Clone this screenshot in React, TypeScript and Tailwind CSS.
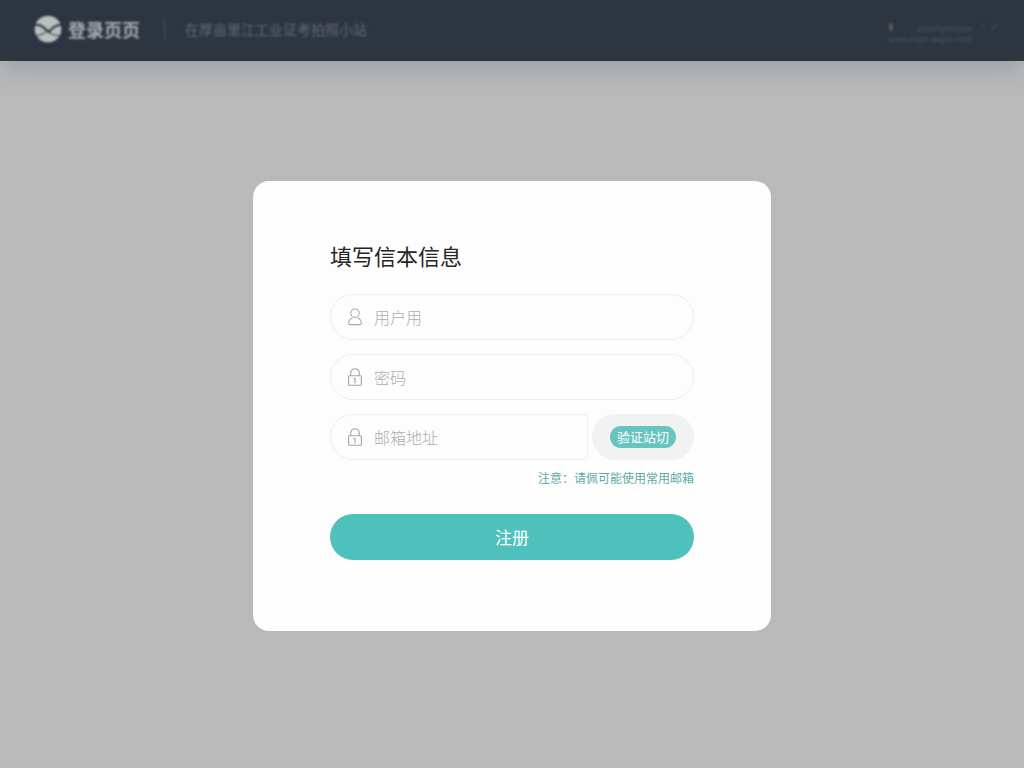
import type { InputHTMLAttributes, ReactNode } from "react"
import clsx from "clsx"

interface FieldProps extends InputHTMLAttributes<HTMLInputElement> {
  id: string
  label: string
  icon: ReactNode
}

function UserIcon() {
  return (
    <svg viewBox="0 0 14 18" className="h-[18px] w-3.5" fill="none" stroke="#acacac" strokeWidth="1.1" strokeLinejoin="round" aria-hidden="true">
      <circle cx="7" cy="5.2" r="4.2" />
      <path d="M4.500 10C2 10.800.8 12.600.8 14.800v1c0 .5.3.8.8.8h10.800c.5 0 .8-.3.8-.8v-1c0-2.200-1.200-4-3.700-4.800" />
    </svg>
  )
}

function LockIcon() {
  return (
    <svg viewBox="0 0 14 18" className="h-[18px] w-3.5" fill="none" stroke="#a5a5a5" strokeWidth="1.1" aria-hidden="true">
      <rect x=".6" y="7.800" width="12.800" height="9.400" rx=".8" />
      <path d="M2.700 7.800V5a4.300 4.300 0 0 1 8.600 0v2.800M5.500 10.500H7v5" />
    </svg>
  )
}

function LogoIcon() {
  return (
    <svg viewBox="0 0 28 28" className="h-7 w-7 shrink-0" aria-hidden="true">
      <circle cx="14" cy="14" r="13.300" fill="#bcbfc1" />
      <path d="M0 10.500C6 8 9 12 15 17c2.500-3.500 6-7 13-7.500" fill="none" stroke="#2d3541" strokeWidth="2.200" />
      <path d="M2 20.500c5-.5 8-1.500 11-4.500 3 3 7 4.500 12 4.500" fill="none" stroke="#2d3541" strokeWidth="1" />
    </svg>
  )
}

function Field({ id, label, icon, className, ...rest }: FieldProps) {
  return (
    <div
      className={clsx(
        "flex h-[46px] min-w-0 flex-1 items-center gap-3 border border-[#efefef] bg-[#fdfdfd] pl-[17px] pr-4 focus-within:border-[#4fc1bc]",
        className
      )}
    >
      <label htmlFor={id} aria-label={label} className="shrink-0">
        {icon}
      </label>
      <input
        id={id}
        placeholder={label}
        aria-label={label}
        className="min-w-0 flex-1 bg-transparent text-base font-light text-[#333333] outline-none placeholder:text-[#adadad]"
        {...rest}
      />
    </div>
  )
}

export default function App() {
  return (
    <div className="flex min-h-screen flex-col bg-[#b9b9b9] font-['Noto_Sans_CJK_SC',sans-serif]">
      <header className="flex h-[61px] items-center bg-[#2d3541] pl-[34px] pr-6 shadow-[0_4px_28px_rgba(90,110,135,0.4)]">
        <div className="flex flex-1 items-center pb-1 blur-[1px]">
          <LogoIcon />
          <span className="ml-1.5 text-lg font-bold text-[#a9adb1]">登录页页</span>
          <span className="ml-6 mr-5 h-5 w-px bg-[#4d5560]" />
          <span className="text-sm text-[#626973]">在厚亩里江工业证考拍照小站</span>
          <div className="ml-auto flex flex-col pt-2 text-[10px] leading-[11px] text-[#4a515c]">
            <div className="flex items-center">
              <span className="h-2 w-1 rounded-sm bg-[#5a5558]" />
              <span className="ml-6">anonymous</span>
              <svg viewBox="0 0 20 8" className="ml-2 h-2 w-5" fill="none" stroke="#4b525c" aria-hidden="true">
                <path d="M2 2l3 2M10 3l3 3 5-5" />
              </svg>
            </div>
            <span className="text-[8px]">www.login-pages.com</span>
          </div>
        </div>
      </header>

      <main className="flex flex-1 items-center justify-center px-4 pb-[18px]">
        <section className="w-full max-w-[518px] rounded-2xl bg-[#fdfdfd] px-[77px] pb-[71px] pt-14">
          <h1 className="text-[22px] leading-9 text-[#262626]">填写信本信息</h1>

          <form className="mt-[21px] flex flex-col" onSubmit={(e) => e.preventDefault()}>
            <div className="flex flex-col gap-3.5">
              <div className="flex">
                <Field id="username" label="用户用" type="text" icon={<UserIcon />} className="rounded-full" />
              </div>
              <div className="flex">
                <Field id="password" label="密码" type="password" icon={<LockIcon />} className="rounded-full" />
              </div>
              <div className="flex gap-1">
                <Field
                  id="email"
                  label="邮箱地址"
                  type="email"
                  icon={<LockIcon />}
                  className="rounded-l-[23px] rounded-r"
                />
                <div className="flex w-[102px] shrink-0 items-center justify-center rounded-full bg-[#f2f2f2]">
                  <button
                    type="button"
                    className="h-[22px] w-[66px] rounded-full bg-[#67c4be] text-[13px] leading-[22px] text-white"
                  >
                    验证站切
                  </button>
                </div>
              </div>
            </div>

            <p className="mt-2 text-right text-xs leading-5 text-[#5fa9a8]">注意：请佩可能使用常用邮箱</p>

            <button
              type="submit"
              className="mt-[26px] h-[46px] rounded-full bg-[#4fc1bc] text-[17px] text-white transition-colors hover:bg-[#45b3ae]"
            >
              注册
            </button>
          </form>
        </section>
      </main>
    </div>
  )
}
